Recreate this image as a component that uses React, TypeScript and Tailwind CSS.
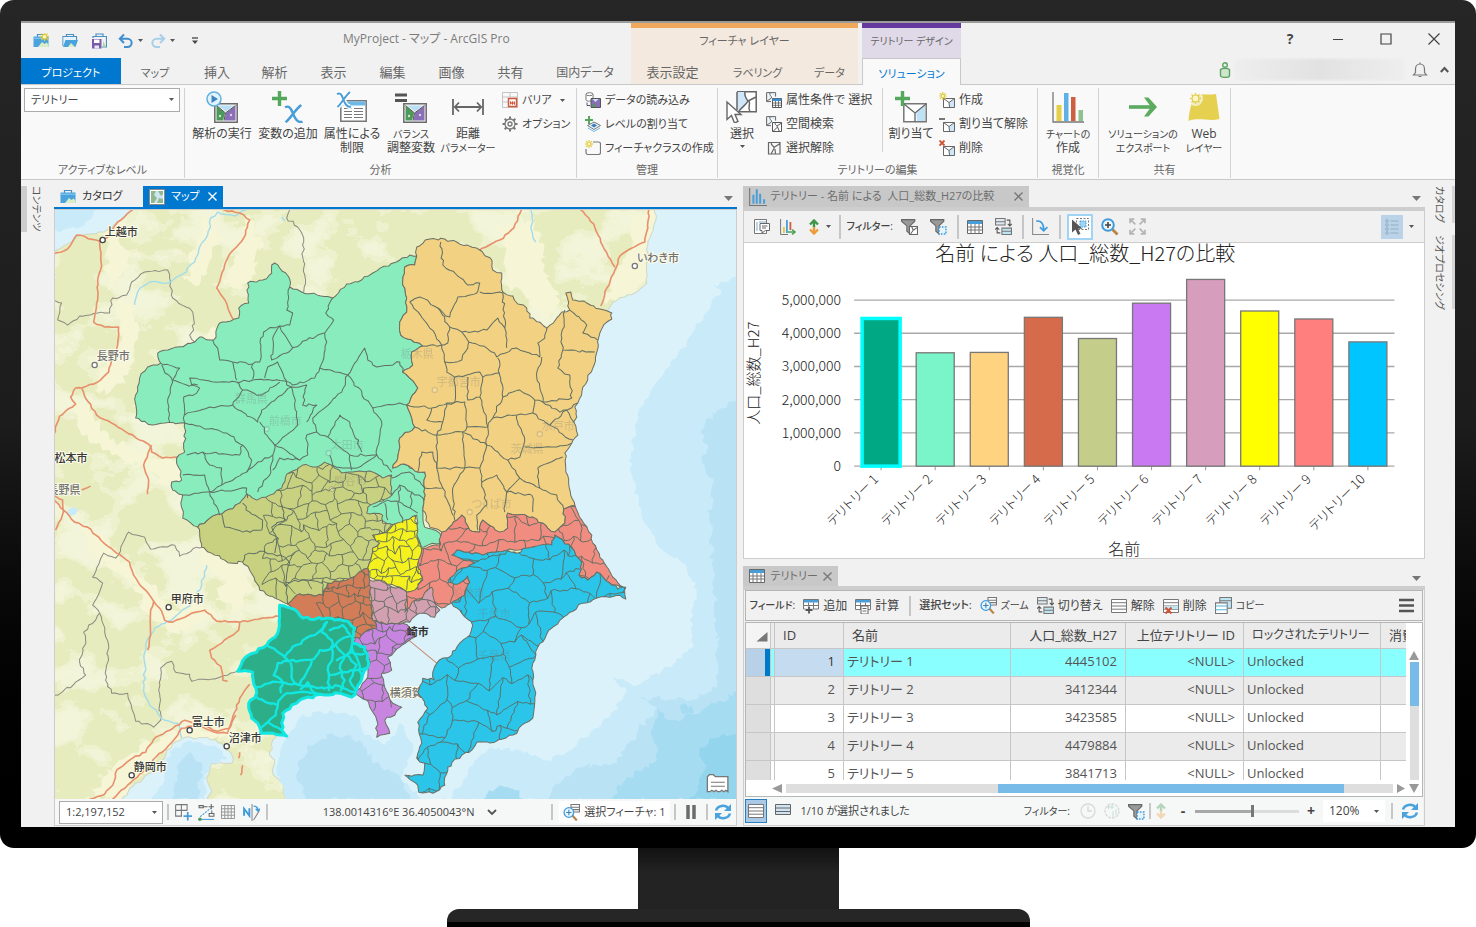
import type { ReactNode } from "react";

/* ---------- small building blocks ---------- */

type IconProps = { children: ReactNode; size?: number; box?: number; className?: string };

const Icon = ({ children, size = 16, box = size, className = "" }: IconProps) => (
	<svg
		width={size}
		height={size}
		viewBox={`0 0 ${box} ${box}`}
		fill="none"
		className={`shrink-0 ${className}`}
		aria-hidden="true"
	>
		{children}
	</svg>
);

const Caret = ({ className = "" }: { className?: string }) => (
	<svg width="5" height="3" viewBox="0 0 5 3" className={`shrink-0 ${className}`} aria-hidden="true">
		<path d="M0 0h5L2.500 3z" fill="#555" />
	</svg>
);

const PaneCaret = () => (
	<svg width="9" height="5" viewBox="0 0 9 5" className="mt-1 shrink-0" aria-hidden="true">
		<path d="M0 0h9L4.500 5z" fill="#777" />
	</svg>
);

const Close = ({ color }: { color: string }) => (
	<Icon size={9}>
		<path d="M.5.5l8 8M8.500.5l-8 8" stroke={color} strokeWidth="1.400" />
	</Icon>
);

const Divider = ({ className = "" }: { className?: string }) => (
	<span className={`w-0.5 shrink-0 bg-[#c6c6c6] ${className}`} />
);

/* ---------- icons ---------- */

const Sun = ({ x, y, r = 2.4 }: { x: number; y: number; r?: number }) => (
	<g stroke="#e0c93c" strokeWidth="1.200">
		<circle cx={x} cy={y} r={r} fill="#fdf6c4" />
		{[0, 45, 90, 135, 180, 225, 270, 315].map((a) => (
			<path key={a} d={`M${x} ${y - r - 0.6}v-1.500`} transform={`rotate(${a} ${x} ${y})`} />
		))}
	</g>
);

const Briefcase = () => (
	<>
		<path d="M4.500 4V1.500h7V4" stroke="#4a90c4" strokeWidth="1.200" />
		<path d="M.5 3.500h15V14H.5z" fill="#4aa3dc" />
		<path d="M.5 5.200h15" stroke="#8fd0f2" />
		<path d="M5 14l4-5 2.500 2 2-1.500 2 2V14z" fill="#d9edc8" />
	</>
);

const IconNew = () => (
	<Icon>
		<Briefcase />
		<Sun x={11.5} y={3.8} />
	</Icon>
);
const IconCase = () => (
	<Icon>
		<Briefcase />
	</Icon>
);
const IconOpen = () => (
	<Icon>
		<path d="M4.500 4V1.500h7V4M1 13V3.500h13.500V7" stroke="#4a90c4" strokeWidth="1.200" />
		<path d="M1.500 4h12.500v9H1.500z" fill="#e4f2fa" />
		<path d="M3.500 7H16l-2.500 7H1z" fill="#4aa3dc" />
		<path d="M6 14l3-4 4 4z" fill="#d9edc8" />
	</Icon>
);
const IconSave = () => (
	<Icon>
		<path d="M5 4V1h7v3M2 5V3.500h13.500V14H11" stroke="#4a90c4" strokeWidth="1.200" />
		<path d="M12 8l3 6h-3z" fill="#a5d8a0" />
		<path d="M1 6h9.500v9.500H1z" fill="#7a5cab" />
		<path d="M3 6.500h5.500V10H3z" fill="#fff" />
		<path d="M3.500 12.500h4.500v3H3.500z" fill="#ece6f5" />
	</Icon>
);
const IconUndo = ({ color = "#3f8fd0", flip = false }) => (
	<Icon className={flip ? "-scale-x-100" : ""}>
		<path d="M6 1.500L1.800 5.700 6 10M2 5.700h7.500a4 4 0 010 8.300H6" stroke={color} strokeWidth="2" />
	</Icon>
);
const IconCustomize = () => (
	<Icon size={8}>
		<path d="M1 1h6" stroke="#444" strokeWidth="1.300" />
		<path d="M1 3.500h6L4 7z" fill="#444" />
	</Icon>
);

const TerritoryTile = ({ x, y }: { x: number; y: number }) => (
	<g transform={`translate(${x} ${y})`}>
		<path d="M.8.8h22.400v18.400H.8z" fill="#f7f7f7" stroke="#6b6b6b" strokeWidth="1.500" />
		<path d="M2.500 2.500L11 10 9 17.500H2.500z" fill="#4c9a5a" />
		<path d="M12 10l9.500-7.500v15H10.500z" fill="#8a6fb8" />
		<path d="M4 2.500h16L12 8.500z" fill="#b8dff5" />
		<path d="M2.500 2.500l9 7.500 10-7.500M11.500 10L10 17.500" stroke="#555" />
		<circle cx="6" cy="13" r="1.200" fill="#c9e8c9" />
		<circle cx="17" cy="12" r="1.200" fill="#ddd0ee" />
	</g>
);
const IconRun = () => (
	<Icon size={32}>
		<TerritoryTile x={8} y={12} />
		<circle cx="8" cy="8" r="7" fill="#e2f3fc" stroke="#5fb0e0" strokeWidth="1.500" />
		<path d="M5.500 4l6.500 4-6.500 4z" fill="#3d86c0" />
	</Icon>
);
const curveX = "M0 2c3-1.500 4.500 0 6 4.500s4 9.500 8 8M13 0C8 4 5 11 .5 15";
const IconAddVar = () => (
	<Icon size={32}>
		<path d="M7.500 0v15M0 7.500h15" stroke="#54a85c" strokeWidth="3.400" />
		<path d={curveX} transform="translate(13 14) scale(1.250 1.150)" stroke="#4a9ed8" strokeWidth="2" />
	</Icon>
);
const IconConstraint = () => (
	<Icon size={32}>
		<path d="M4.800 9.800h25.400v20.400H4.800z" fill="#fff" stroke="#777" strokeWidth="1.500" />
		<path d="M5.500 10.500h24v4h-24z" fill="#6cb8e8" />
		<path d="M8 17.500h8M8 20.500h8M8 23.500h8M8 26.500h8M18 17.500h9M18 20.500h9M18 23.500h9M18 26.500h9" stroke="#777" />
		<path d={curveX} transform="translate(1 1)" stroke="#fff" strokeWidth="5" />
		<path d={curveX} transform="translate(1 1)" stroke="#4a9ed8" strokeWidth="2" />
	</Icon>
);
const IconBalance = () => (
	<Icon size={32}>
		<path d="M0 4h12M0 9.500h12" stroke="#555" strokeWidth="3" />
		<TerritoryTile x={8} y={12} />
	</Icon>
);
const IconDistance = () => (
	<Icon size={32}>
		<path d="M1 8v16M31 8v16M3 16h26M7 11.500L2.800 16 7 20.500M25 11.500l4.200 4.500-4.200 4.500" stroke="#666" strokeWidth="1.800" />
	</Icon>
);
const IconBarrier = () => (
	<Icon>
		<path d="M.5.5h15v15H.5zM.5 5h15M.5 10h6M8 .5V5" stroke="#c4c4c4" />
		<path d="M6.500 6.500h8v8h-8z" fill="#fff" stroke="#d0573a" strokeWidth="1.500" />
		<path d="M8.500 12.500v-3l2 3v-3l2 3v-3" stroke="#d0573a" />
	</Icon>
);
const IconGear = () => (
	<Icon>
		<circle cx="8" cy="8" r="5" stroke="#777" strokeWidth="1.300" />
		<circle cx="8" cy="8" r="2" stroke="#777" strokeWidth="1.300" />
		{[0, 45, 90, 135, 180, 225, 270, 315].map((a) => (
			<path key={a} d="M8 3V.5" stroke="#777" strokeWidth="2" transform={`rotate(${a} 8 8)`} />
		))}
	</Icon>
);
const IconLoad = () => (
	<Icon>
		<path d="M1 2.200v5.500c0 2 7 2 7 0V2.200" fill="#fff" stroke="#777" />
		<ellipse cx="4.500" cy="2.200" rx="3.500" ry="1.500" fill="#fff" stroke="#777" />
		<path d="M6 6.500h9.500v9H6z" fill="#8a6fb8" stroke="#555" />
		<path d="M6.500 15l4-4.500V15z" fill="#4c9a5a" />
		<path d="M7.500 7h6l-3 3z" fill="#cfe8f7" />
		<path d="M2 10.500v3h3" stroke="#555" />
	</Icon>
);
const IconLevel = () => (
	<Icon>
		<path d="M9 6l6.500 3.500L9 13.500 2.500 9.500z" fill="#e4f3fb" stroke="#777" />
		<path d="M3 12l6 3.500 6-3.500" stroke="#6cb8e8" />
		<path d="M9 7.500l3 2-3 2-3-2z" fill="#3d7fb5" />
		<path d="M4 0v8M0 4h8" stroke="#54a85c" strokeWidth="2" />
	</Icon>
);
const IconNewClass = () => (
	<Icon>
		<path d="M8 2h5.500a2 2 0 012 2v8.500a2 2 0 01-2 2H3a2 2 0 01-2-2V9" stroke="#777" strokeWidth="1.200" />
		<Sun x={4} y={4} r={2} />
	</Icon>
);
const IconSelect = () => (
	<Icon size={32}>
		<path d="M11 .8h19.200v20H12" fill="#fff" stroke="#666" strokeWidth="1.500" />
		<path d="M11 1h8c-1 4 1 6 3 9-2 4-6 6-9 10l-2-1z" fill="#cfe7f8" />
		<path d="M19 1c-1 4 1 6 3 9-2 4-6 6-9 10M22 10l8-4M23 10c2 4-2 7 1 10M11 1v18" stroke="#666" strokeWidth="1.500" />
		<path d="M1 11v17.500l4.500-4 3 7.500 3.500-1.500L9 23.500h6z" fill="#fff" stroke="#666" strokeWidth="1.400" />
	</Icon>
);
const IconByAttr = () => (
	<Icon>
		<path d="M.6.600h9v4M.6.600v9H5M4 .6C3 4 6 3.500 5.500 6L1 9" fill="#e4f1fa" stroke="#666" />
		<path d="M6.500 6.500h9v9h-9z" fill="#fff" stroke="#555" />
		<path d="M6.500 6.500h9v2.500h-9z" fill="#3f8fd0" />
		<path d="M6.500 11h9M6.500 13.300h9M9.500 9v6.500M12.500 9v6.500" stroke="#555" strokeWidth=".8" />
	</Icon>
);
const IconSpatial = () => (
	<Icon>
		<path d="M.6.600h9v4M.6.600v9H5M4 .6C3 4 6 3.500 5.500 6L1 9" fill="#e4f1fa" stroke="#666" />
		<path d="M6.500 6.500h9v9h-9z" fill="#fff" stroke="#555" />
		<path d="M9 6.500c0 4 3 2 2 5l-4 4M11 10l4.500-3M11.500 11l2 4.500" stroke="#555" />
	</Icon>
);
const IconClear = () => (
	<Icon>
		<path d="M2.500 2.500h11.500v11.500H2.500zM5 2.500c0 4 4 3 3 6l-3 5.500M8 7.500l6-4M9 9l.5 5" stroke="#666" strokeWidth="1.200" />
	</Icon>
);
const AreaTile = () => (
	<>
		<path d="M4.500 6.500h11v9h-11z" fill="#fff" stroke="#666" />
		<path d="M10 10.500l5-3.500v8h-4.500z" fill="#cfe7f8" />
		<path d="M4.500 6.500l5.500 4 5.500-4M10 10.500l.5 5" stroke="#666" />
	</>
);
const IconAssign = () => (
	<Icon size={32}>
		<path d="M8.800 12.800h22.400v18H8.800z" fill="#fff" stroke="#777" strokeWidth="1.500" />
		<path d="M21 21l9-7v16h-8z" fill="#bfe2f6" />
		<path d="M9 13l11 9 11-9M20 22v9" stroke="#666" strokeWidth="1.300" />
		<path d="M7.500 0v15M0 7.500h15" stroke="#54a85c" strokeWidth="3.400" />
	</Icon>
);
const IconCreate = () => (
	<Icon>
		<AreaTile />
		<Sun x={3.800} y={4} r={1.800} />
	</Icon>
);
const IconUnassign = () => (
	<Icon>
		<AreaTile />
		<path d="M0 3h6" stroke="#555" strokeWidth="1.600" />
	</Icon>
);
const IconRemove = () => (
	<Icon>
		<AreaTile />
		<path d="M.5.5l5 5M5.500.5l-5 5" stroke="#cf5234" strokeWidth="1.800" />
	</Icon>
);
const IconChart = () => (
	<Icon size={32}>
		<path d="M1 1v30h31" stroke="#777" strokeWidth="1.300" />
		<path d="M4.500 14h5v16h-5z" fill="#e5cf45" />
		<path d="M12 2h4.500v28H12z" fill="#5fb0e4" />
		<path d="M19 6h4.500v24H19z" fill="#cb5f40" />
		<path d="M26.500 19H31v11h-4.500z" fill="#8fc28f" />
	</Icon>
);
const IconExport = () => (
	<Icon size={32}>
		<path d="M2 16h24" stroke="#5cab5f" strokeWidth="3.600" />
		<path d="M17 6.500h4.500L30 16l-8.500 9.500H17l7-9.500z" fill="#5cab5f" />
	</Icon>
);
const IconWebLayer = () => (
	<Icon size={32}>
		<path d="M5 5c8-4 14 0 23-2l3.500 25c-10 3-20-2-31 2C1 20 4 13 5 5z" fill="#e5d14f" />
		<circle cx="7.500" cy="7.500" r="7.500" fill="#f9f9f9" opacity=".7" />
		<Sun x={7.500} y={7.500} r={3.500} />
	</Icon>
);

const IconBars = () => (
	<Icon size={18} box={16}>
		<path d="M.6 0v15.500H16" stroke="#777" />
		<path d="M3 6h1.800v8H3zM6 1h1.800v13H6zM9 5h1.800v9H9zM12.500 10h1.800v4h-1.800z" fill="#4a9ed8" />
	</Icon>
);
const IconMapTab = () => (
	<Icon>
		<path d="M.5.5h15v15H.5z" fill="#fff" stroke="#888" />
		<path d="M2 2h12v12H2z" fill="#cfe6f2" />
		<path d="M2 2h5l-2 4 3 3-3 5H2zM9 2h5v3l-2 2zM10 9l4 1v4H8z" fill="#8fb98c" />
	</Icon>
);
const IconTable = () => (
	<Icon>
		<path d="M.5 1.500h15v13H.5z" fill="#fff" stroke="#666" />
		<path d="M1 2h14v3H1z" fill="#4a9ed8" />
		<path d="M.5 8h15M.5 11h15M4 5v9.500M8 5v9.500M12 5v9.500" stroke="#777" />
	</Icon>
);
const IconProps16 = () => (
	<Icon>
		<path d="M.5.5h12v14H.5z" fill="#fff" stroke="#777" />
		<path d="M3 3v9M5 3h7" stroke="#7aa9c9" />
		<path d="M6 4.500h9.500v7h-4L8 14v-2.500H6z" fill="#fff" stroke="#666" />
		<path d="M8 7h5.500M8 9h4" stroke="#666" />
	</Icon>
);
const IconSortChart = () => (
	<Icon>
		<path d="M.6 0v15.500H8" stroke="#777" />
		<path d="M3 8h1.800v6H3z" fill="#e0c93c" />
		<path d="M6 1h1.800v13H6z" fill="#4a9ed8" />
		<path d="M9.500 3h1.800v8H9.500z" fill="#cb5f40" />
		<path d="M8 13h6M12 10.500l3 2.500-3 2.500" stroke="#4ca354" strokeWidth="1.500" />
	</Icon>
);
const IconUpDown = ({ faint = false }) => (
	<Icon size={16} className={faint ? "opacity-35" : ""}>
		<path d="M8 8V2M4 5.500L8 1.500l4 4" stroke="#3f9648" strokeWidth="2.400" />
		<path d="M8 8v6M4 10.500l4 4 4-4" stroke="#ee9a3a" strokeWidth="2.400" />
	</Icon>
);
const Funnel = () => <path d="M.5 1.500h12.500v1.500L8.500 7.500V15l-3-2.500v-5L.5 3z" fill="#999" stroke="#666" />;
const IconFunnelMap = () => (
	<Icon size={17} box={16}>
		<Funnel />
		<path d="M8 8h7.500v7.500H8z" fill="#fff" stroke="#666" />
		<path d="M10 8l1.500 3.500L9 15M11.500 11.500L15 9" stroke="#666" />
	</Icon>
);
const IconFunnelSel = () => (
	<Icon size={17} box={16}>
		<Funnel />
		<path d="M8.500 8.500h6.500V15H8.500z" fill="#e6f3fb" stroke="#3f9bdc" strokeWidth="1.400" strokeDasharray="1.500 1.200" />
	</Icon>
);
const IconSwitch = () => (
	<Icon size={17} box={16}>
		<path d="M.5.5h9v6h-9zM.5 3.500h9" fill="#dde9ee" stroke="#777" />
		<path d="M6.500 9.500h9v6h-9zM6.500 12.500h9" fill="#bfe6f0" stroke="#777" />
		<path d="M11 2h3v5M12 5.500l2 2 2-2M5 14H2V9.500M0 11l2-2 2 2" stroke="#555" />
	</Icon>
);
const IconRotateAxis = () => (
	<Icon size={17} box={16}>
		<path d="M.6 0v15.500H16" stroke="#888" />
		<path d="M4 3c5-1 7 3 7 8M7.500 8.500L11 12l3.500-3.500" stroke="#3f9bdc" strokeWidth="1.600" />
	</Icon>
);
const IconCursorSel = () => (
	<Icon size={18} box={18}>
		<path d="M5.500.5h12v11h-12z" fill="#fff" stroke="#777" strokeDasharray="2 1.500" />
		<path d="M9 3h6v6H9z" fill="#9ed6f5" stroke="#3f9bdc" strokeDasharray="1.500 1" />
		<path d="M1 1.500v13l3.500-3 2.500 5.500 2.500-1.200-2.500-5h4.500z" fill="#555" />
	</Icon>
);
const IconZoomIn = () => (
	<Icon size={18} box={18}>
		<path d="M11.500 11.500l5 5" stroke="#b98346" strokeWidth="2.800" />
		<circle cx="7" cy="7" r="5.800" fill="#eaf6fd" stroke="#3f9bdc" strokeWidth="2" />
		<path d="M7 4v6M4 7h6" stroke="#444" strokeWidth="1.600" />
	</Icon>
);
const IconExpand = () => (
	<Icon size={17} box={16}>
		<path
			d="M1 5V1h4M1 1l5 5M11 1h4v4M15 1l-5 5M1 11v4h4M1 15l5-5M15 11v4h-4M15 15l-5-5"
			stroke="#b5b5b5"
			strokeWidth="1.600"
		/>
	</Icon>
);
const IconLegend = () => (
	<Icon>
		<g stroke="#93aec4">
			<circle cx="3" cy="2" r="1.300" />
			<circle cx="3" cy="6" r="1.300" />
			<circle cx="3" cy="10" r="1.300" />
			<circle cx="3" cy="14" r="1.300" />
			<path d="M6.500 2h8M6.500 6h8M6.500 10h8M6.500 14h8" />
		</g>
	</Icon>
);
const Rows = () => (
	<>
		<path d="M.5 1.500h15v13H.5z" fill="#fff" stroke="#777" />
		<path d="M.5 4.700h15M.5 8h15M.5 11.200h15" stroke="#777" />
	</>
);
const IconFieldAdd = () => (
	<Icon>
		<path d="M.5 1.500h15V11H.5z" fill="#fff" stroke="#777" />
		<path d="M1 2h14v2.500H1z" fill="#4a9ed8" />
		<path d="M.5 7.500h15M5.500 4.500V11M10.500 4.500V11" stroke="#777" />
		<path d="M6 8v8M2 12h8" stroke="#f1f1f1" strokeWidth="3.500" />
		<path d="M6 8.500v7M2.500 12h7" stroke="#555" strokeWidth="1.800" />
	</Icon>
);
const IconFieldCalc = () => (
	<Icon>
		<path d="M.5 1.500h15v10H.5z" fill="#fff" stroke="#777" />
		<path d="M1 2h14v2.500H1z" fill="#4a9ed8" />
		<path d="M.5 7.500h15M5.500 4.500v7M10.500 4.500v7" stroke="#777" />
		<path d="M6 8h7v8H6z" fill="#fff" stroke="#666" />
		<path d="M7.500 10.500h4M7.500 13h4" stroke="#666" />
	</Icon>
);
const IconZoomSel = () => (
	<Icon size={17} box={16}>
		<path d="M7.500.5h8v7h-8zM7.500 3h8M7.500 5.300h8" fill="#fff" stroke="#777" />
		<path d="M9 11l4 4.500" stroke="#b98346" strokeWidth="2" />
		<circle cx="5.500" cy="8" r="4.500" fill="#eaf6fd" stroke="#3f9bdc" strokeWidth="1.200" />
		<path d="M5.500 5.500v5M3 8h5" stroke="#3d7fb5" />
	</Icon>
);
const IconRows = () => (
	<Icon>
		<Rows />
	</Icon>
);
const IconRowsDelete = () => (
	<Icon>
		<Rows />
		<path d="M1 8h14v3H1z" fill="#bfe6f5" />
		<path d="M2.500 9.500l6 6M8.500 9.500l-6 6" stroke="#cf5234" strokeWidth="2" />
	</Icon>
);
const IconCopy = () => (
	<Icon size={17} box={16}>
		<path d="M4.500.5h11v10h-11zM4.500 3.500h11" fill="#bfe6f5" stroke="#777" />
		<path d="M.5 5.500h11v10H.5z" fill="#fff" stroke="#777" />
		<path d="M.5 8.500h11M.5 12h11" stroke="#4fb6d8" />
	</Icon>
);
const IconRefresh = () => (
	<Icon size={18} box={18}>
		<path d="M2 7.500C3.500 2.500 11 1 14.500 5.500M16 10.500c-1.500 5-9 6.500-12.500 2" stroke="#4aa3dc" strokeWidth="2.600" />
		<path d="M17 1v7h-7zM1 17v-7h7z" fill="#4aa3dc" />
	</Icon>
);
const IconGridPlus = () => (
	<Icon size={17} box={16}>
		<path d="M.6.600h10.800v5.800M.6.600v10.800h6M6 .6v10.800M.6 6h10.800" stroke="#777" />
		<path d="M12 7.500v8M8 11.500h8" stroke="#4a9ed8" strokeWidth="1.700" />
	</Icon>
);
const IconEditNodes = () => (
	<Icon size={17} box={16}>
		<path d="M2 12L12 4" stroke="#4a9ed8" strokeDasharray="2 1" />
		<path d="M1 1.500h4v2H1zM10.500 9h4.500v2.500h-4.500zM5 2.500h4M13 6v3" stroke="#666" />
		<path d="M12.500 0v5M10 2.500h5" stroke="#666" />
		<path d="M2 14.500h13" stroke="#4a9ed8" />
		<circle cx="1.800" cy="14.300" r="1.700" fill="#4c9a5a" />
	</Icon>
);
const IconMesh = () => (
	<Icon size={14} box={14}>
		<path
			d="M.5.5h13v13H.5zM.5 3.750h13M.5 7h13M.5 10.250h13M3.750.5v13M7 .5v13M10.250.5v13"
			stroke="#999"
		/>
	</Icon>
);
const IconNorth = () => (
	<Icon size={17} box={16}>
		<path d="M1 11V4.500l5 6.500V4" stroke="#3f9bdc" strokeWidth="1.800" />
		<path d="M8.500 0v16M10 15l5.500-9" stroke="#888" />
		<path d="M10 2c3 0 4 1.500 4 4M12 4.500l2 2 2-2" stroke="#3f9bdc" strokeWidth="1.300" />
	</Icon>
);
const IconClock = () => (
	<Icon className="opacity-40">
		<circle cx="8" cy="8" r="7" stroke="#aaa" strokeWidth="1.300" />
		<path d="M8 3v5h4" stroke="#aaa" strokeWidth="1.300" />
	</Icon>
);
const IconRange = () => (
	<Icon className="opacity-40">
		<circle cx="8" cy="8" r="7" stroke="#aaa" strokeWidth="1.300" strokeDasharray="3 1" />
		<path d="M3 4h7M4.500 2v4M8 2v4M9 8v6M12 6v6" stroke="#7fb7a0" />
	</Icon>
);

/* ---------- title bar and tabs ---------- */

const tabs = [
	{ label: "マップ", className: "w-[68px] text-[11px]" },
	{ label: "挿入", className: "w-14" },
	{ label: "解析", className: "w-[59px]" },
	{ label: "表示", className: "w-[59px]" },
	{ label: "編集", className: "w-[59px]" },
	{ label: "画像", className: "w-[59px]" },
	{ label: "共有", className: "w-[59px]" },
	{ label: "国内データ", className: "w-[90px] text-xs" },
];

const contextTabs = [
	{ label: "表示設定", className: "w-[83px]" },
	{ label: "ラベリング", className: "w-[87px] text-[11px]" },
	{ label: "データ", className: "w-[57px] text-[11px]" },
];

const Header = () => (
	<header className="flex h-16 shrink-0 border-t-2 border-b border-t-[#9b9b9b] border-b-[#c8c8c8] text-[13px] text-[#666]">
		<div className="flex w-[610px] shrink-0 flex-col">
			<div className="flex h-[35px] items-center pl-3">
				<button aria-label="新規" className="w-[29px]"><IconNew /></button>
				<button aria-label="開く" className="w-[29px]"><IconOpen /></button>
				<button aria-label="保存" className="w-[27px]"><IconSave /></button>
				<button aria-label="元に戻す" className="flex w-8 items-center gap-1"><IconUndo /><Caret /></button>
				<button aria-label="やり直し" className="flex w-[41px] items-center gap-1"><IconUndo color="#a9cfe8" flip /><Caret /></button>
				<button aria-label="カスタマイズ"><IconCustomize /></button>
				<h1 className="ml-36 pb-1 text-xs text-[#7c7c7c]">MyProject - マップ - ArcGIS Pro</h1>
			</div>
			<nav className="flex flex-1 items-stretch">
				<button className="w-[100px] bg-[#0078d0] pt-1 text-[11px] text-white">プロジェクト</button>
				{tabs.map((tab) => (
					<button key={tab.label} className={`pt-1 ${tab.className}`}>{tab.label}</button>
				))}
			</nav>
		</div>
		<div className="flex shrink-0 flex-col border-t-[5px] border-[#f0a95c] bg-[#f3e9de]">
			<span className="flex h-[30px] items-center justify-center pb-1 text-[11px]">フィーチャ レイヤー</span>
			<nav className="flex flex-1">
				{contextTabs.map((tab) => (
					<button key={tab.label} className={`pt-1 ${tab.className}`}>{tab.label}</button>
				))}
			</nav>
		</div>
		<div className="ml-1 flex w-[99px] shrink-0 flex-col border-t-[5px] border-[#643a9e] bg-[#e0d9e8]">
			<span className="flex h-[30px] items-center justify-center pb-1 text-[10px] whitespace-nowrap">テリトリー デザイン</span>
			<button className="-mb-px flex-1 border border-b-0 border-[#c8c8c8] bg-[#f9f9f9] pt-1 text-[11px] text-[#0078d0]">
				ソリューション
			</button>
		</div>
		<div className="flex min-w-0 flex-1 flex-col text-[#444]">
			<div className="flex h-8 items-center justify-end gap-2 pr-px">
				<button className="w-10 text-sm font-bold">?</button>
				<button aria-label="最小化" className="flex w-10 justify-center">
					<Icon size={12}><path d="M1 6.500h10" stroke="#444" /></Icon>
				</button>
				<button aria-label="最大化" className="flex w-10 justify-center">
					<Icon size={12}><path d="M1 1h10v10H1z" stroke="#444" strokeWidth="1.200" /></Icon>
				</button>
				<button aria-label="閉じる" className="flex w-10 justify-center">
					<Icon size={12}><path d="M.5.5l11 11M11.500.5l-11 11" stroke="#444" strokeWidth="1.200" /></Icon>
				</button>
			</div>
			<div className="flex flex-1 items-center justify-end pr-1.5">
				<Icon size={16}>
					<circle cx="8" cy="3" r="2.300" fill="#e5f3e3" stroke="#5ea364" strokeWidth="1.400" />
					<path d="M3.500 7.500c1.500-1.500 7.500-1.500 9 0v6c0 2.500-9 2.500-9 0z" fill="#cfe6cd" stroke="#5ea364" strokeWidth="1.400" />
				</Icon>
				<span className="mr-2 ml-0.5 h-[21px] w-[169px] bg-linear-to-r from-[#eeeeee] via-[#e2e2e2] to-[#eeeeee] blur-[1px]" />
				<button aria-label="通知" className="mr-3">
					<Icon size={16}>
						<path d="M1.500 13h13l-2-2.500V7c0-3-2-5-4.500-5S3.500 4 3.500 7v3.500zM8 2V.5M6.500 14.500h3" stroke="#777" strokeWidth="1.200" />
					</Icon>
				</button>
				<button aria-label="リボンを閉じる">
					<Icon size={9}><path d="M.8 7l3.700-4 3.700 4" stroke="#555" strokeWidth="2" /></Icon>
				</button>
			</div>
		</div>
	</header>
);

/* ---------- ribbon ---------- */

const RibbonGroup = ({ label, className, children }: { label: string; className: string; children: ReactNode }) => (
	<section className={`flex shrink-0 flex-col ${className}`}>
		<div className="flex min-h-0 flex-1 border-r border-[#d2d2d2]">{children}</div>
		<h2 className="flex h-4 items-center justify-center border-r border-[#d2d2d2] text-[11px] text-[#666]">{label}</h2>
	</section>
);

const isKatakana = (text: string) => /^[ァ-ー]+の?$/.test(text);

const BigButton = ({ icon, lines, className, caret = false }: { icon: ReactNode; lines: string[]; className: string; caret?: boolean }) => (
	<button className={`flex shrink-0 flex-col items-center pt-[3px] text-xs leading-[14px] whitespace-nowrap ${className}`}>
		<span className="mb-1">{icon}</span>
		{lines.map((line) => (
			<span key={line} className={isKatakana(line) ? "text-[10px] leading-[14px]" : ""}>{line}</span>
		))}
		{caret && <Caret className="mt-1" />}
	</button>
);

const SmallButton = ({ icon, label, dense = false, caret = false }: { icon: ReactNode; label: string; dense?: boolean; caret?: boolean }) => (
	<button className={`flex h-6 items-center gap-1 whitespace-nowrap ${dense ? "text-[11px]" : "text-xs"}`}>
		{icon}
		{label}
		{caret && <Caret className="ml-1" />}
	</button>
);

const Ribbon = () => (
	<div className="flex h-[95px] shrink-0 border-b border-[#c8c8c8] bg-[#f9f9f9] pt-[3px] pb-px text-[#444]">
		<RibbonGroup label="アクティブなレベル" className="w-[164px]">
			<div className="relative ml-[3px] h-6 w-[156px] self-start">
				<select
					aria-label="アクティブなレベル"
					className="block h-6 w-full appearance-none border border-[#ababab] bg-white pl-1.5 text-[11px]"
				>
					<option>テリトリー</option>
				</select>
				<Caret className="pointer-events-none absolute top-2.5 right-1.5" />
			</div>
		</RibbonGroup>
		<RibbonGroup label="分析" className="w-[392px]">
			<div className="flex pl-[3px]">
				<BigButton icon={<IconRun />} lines={["解析の実行"]} className="w-[68px]" />
				<BigButton icon={<IconAddVar />} lines={["変数の追加"]} className="w-16" />
				<BigButton icon={<IconConstraint />} lines={["属性による", "制限"]} className="w-16" />
				<BigButton icon={<IconBalance />} lines={["バランス", "調整変数"]} className="w-[54px]" />
				<BigButton icon={<IconDistance />} lines={["距離", "パラメーター"]} className="w-[60px]" />
				<div className="pl-1">
					<SmallButton icon={<IconBarrier />} label="バリア" dense caret />
					<SmallButton icon={<IconGear />} label="オプション" dense />
				</div>
			</div>
		</RibbonGroup>
		<RibbonGroup label="管理" className="w-[141px]">
			<div className="pl-2">
				<SmallButton icon={<IconLoad />} label="データの読み込み" dense />
				<SmallButton icon={<IconLevel />} label="レベルの割り当て" dense />
				<SmallButton icon={<IconNewClass />} label="フィーチャクラスの作成" dense />
			</div>
		</RibbonGroup>
		<RibbonGroup label="テリトリーの編集" className="w-80">
			<BigButton icon={<IconSelect />} lines={["選択"]} className="ml-1 w-10" caret />
			<div className="w-[120px] pl-1">
				<SmallButton icon={<IconByAttr />} label="属性条件で 選択" />
				<SmallButton icon={<IconSpatial />} label="空間検索" />
				<SmallButton icon={<IconClear />} label="選択解除" />
			</div>
			<span className="mr-1 h-16 w-px bg-[#d2d2d2]" />
			<BigButton icon={<IconAssign />} lines={["割り当て"]} className="w-12" />
			<div className="pl-1">
				<SmallButton icon={<IconCreate />} label="作成" />
				<SmallButton icon={<IconUnassign />} label="割り当て解除" />
				<SmallButton icon={<IconRemove />} label="削除" />
			</div>
		</RibbonGroup>
		<RibbonGroup label="視覚化" className="w-[61px]">
			<BigButton icon={<IconChart />} lines={["チャートの", "作成"]} className="w-full" />
		</RibbonGroup>
		<RibbonGroup label="共有" className="w-[132px]">
			<BigButton icon={<IconExport />} lines={["ソリューションの", "エクスポート"]} className="ml-2 w-[72px]" />
			<BigButton icon={<IconWebLayer />} lines={["Web", "レイヤー"]} className="w-[50px]" />
		</RibbonGroup>
	</div>
);

/* ---------- map ---------- */

const noise = (x: number, y: number) => {
	const s = Math.sin(x * 12.9898 + y * 78.233) * 43758.5453;
	return s - Math.floor(s) - 0.5;
};

// Turns a coarse "x,y x,y" list into a path with a ragged, surveyed look.
const rough = (points: string, closed = false, amount = 2.6) => {
	const pts = points.trim().split(/\s+/).map((p) => p.split(",").map(Number));
	if (closed) pts.push(pts[0]);
	let d = `M${pts[0][0]} ${pts[0][1]}`;
	for (let i = 1; i < pts.length; i++) {
		const [x0, y0] = pts[i - 1];
		const [x1, y1] = pts[i];
		const steps = Math.max(1, Math.round(Math.hypot(x1 - x0, y1 - y0) / 4));
		for (let s = 1; s <= steps; s++) {
			const x = x0 + ((x1 - x0) * s) / steps;
			const y = y0 + ((y1 - y0) * s) / steps;
			const k = s === steps ? 0 : amount;
			d += `L${(x + noise(Math.round(x), y) * k).toFixed(1)} ${(y + noise(y, Math.round(x)) * k).toFixed(1)}`;
		}
	}
	return closed ? `${d}Z` : d;
};

// Irregular honeycomb of district borders covering a box.
const districts = (x: number, y: number, w: number, h: number, size: number) => {
	const step = size * 0.65;
	const at = (i: number, j: number) => {
		const px = x + i * step + noise(i + x, j * 3.1) * size * 0.7;
		const py = y + j * size + noise(j + y, i * 5.3) * size * 0.9;
		return `${px.toFixed(1)},${py.toFixed(1)}`;
	};
	let d = "";
	for (let i = 0; i * step < w; i++) {
		for (let j = 0; j * size < h; j++) {
			d += rough(`${at(i, j)} ${at(i + 1, j)}`);
			if ((i + j) % 2 === 0) d += rough(`${at(i, j)} ${at(i, j + 1)}`);
		}
	}
	return d;
};

type Territory = { id: number; fill: string; outline: string; mesh?: [number, number, number, number, number] };

const territories: Territory[] = [
	{
		id: 2,
		fill: "#88ecbd",
		outline:
			"275,263 280,268 290,279 290,287 302,292 333,298 347,284 358,282 373,273 400,260 410,255 417,256 415,265 405,267 403,285 407,298 407,312 400,322 401,335 423,346 412,352 413,365 403,372 418,388 407,405 415,427 400,438 398,458 393,468 400,462 418,472 425,472 425,488 423,510 425,527 440,533 440,543 428,545 422,547 418,537 417,515 400,525 387,523 367,513 330,500 240,503 222,514 213,516 198,527 183,518 182,500 183,495 173,490 172,482 182,480 177,458 185,452 185,423 165,423 153,425 136,418 136,395 140,378 148,367 161,363 158,353 168,350 195,342 200,337 214,340 220,323 239,318 239,308 249,303 248,283 263,280 272,273 272,265",
	},
	{
		id: 5,
		fill: "#c8d180",
		outline:
			"198,527 213,516 222,514 240,503 247,494 257,500 270,495 282,488 287,474 303,465 317,467 325,462 335,468 342,473 350,472 373,472 383,478 392,475 392,495 368,507 367,513 383,515 383,523 393,525 387,532 373,535 380,543 373,548 372,555 368,568 362,572 347,580 328,583 323,595 297,595 288,604 280,600 260,590 250,570 243,562 233,563 215,555 202,547 200,533",
		mesh: [266, 464, 130, 125, 13],
	},
	{
		id: 3,
		fill: "#f2d182",
		outline:
			"417,256 417,247 430,239 445,239 480,250 492,260 493,270 502,273 503,292 513,296 518,304 527,308 530,318 540,322 547,328 562,312 570,310 566,293 571,292 573,300 587,303 600,309 612,313 612,319 607,322 600,333 597,352 593,368 583,387 578,403 575,407 577,417 574,422 578,435 572,443 565,453 566,472 572,498 575,505 564,509 565,523 555,532 533,517 508,513 508,528 500,532 483,520 480,532 470,530 462,515 452,525 442,532 430,527 423,510 425,488 425,472 418,472 405,464 393,468 398,458 400,438 415,427 407,405 418,388 403,372 413,365 412,352 423,346 401,335 400,322 407,312 407,298 403,285 405,267 415,265",
	},
	{
		id: 9,
		fill: "#f08d80",
		outline:
			"442,532 452,525 462,515 470,530 480,532 483,520 500,532 508,528 508,513 533,517 555,532 565,523 564,509 575,505 582,520 592,535 593,543 603,560 620,585 625,588 610,583 597,572 588,580 579,575 582,562 572,548 555,535 552,545 527,548 507,550 483,555 457,550 475,563 462,568 448,580 458,583 468,576 470,582 465,595 452,603 442,608 435,603 420,598 407,610 400,593 412,590 423,580 417,563 422,548 440,545",
		mesh: [400, 505, 200, 110, 19],
	},
	{
		id: 10,
		fill: "#2bc5e9",
		outline:
			"555,535 552,545 540,545 527,548 517,553 507,550 483,555 457,550 452,555 475,563 462,568 450,578 448,583 458,584 468,576 470,582 465,595 452,603 460,610 473,625 470,635 460,643 452,655 437,663 433,672 435,680 423,678 418,692 428,708 418,722 422,743 417,758 425,763 423,775 405,775 418,785 419,792 433,793 445,785 448,767 462,755 472,750 477,742 495,742 517,733 522,725 533,718 536,693 533,680 533,663 538,647 552,628 567,615 583,603 597,598 620,595 626,599 626,587 618,589 610,583 597,572 588,580 579,575 582,562 572,548",
		mesh: [400, 530, 240, 270, 22],
	},
	{
		id: 8,
		fill: "#f4f11e",
		outline:
			"416,516 417,535 422,550 418,567 423,578 415,590 407,592 400,587 380,580 370,577 368,568 372,555 373,548 380,543 373,535 387,532 393,525 405,520",
		mesh: [362, 510, 65, 85, 10],
	},
	{
		id: 4,
		fill: "#d27c58",
		outline:
			"288,604 297,595 323,595 328,583 347,580 363,570 368,568 370,580 372,617 377,628 365,632 360,638 353,637 355,627 347,621 327,618 303,618 293,610",
		mesh: [320, 565, 60, 80, 10],
	},
	{
		id: 7,
		fill: "#d2a0b0",
		outline:
			"370,580 380,580 393,587 400,587 407,592 405,612 415,600 423,597 432,587 435,603 440,610 435,617 420,613 410,622 403,623 380,623 373,620",
		mesh: [368, 575, 75, 55, 12],
	},
	{
		id: 6,
		fill: "#c885e0",
		outline:
			"375,620 380,623 403,623 410,628 415,637 400,647 388,657 392,670 382,673 385,687 393,703 402,707 395,715 385,720 390,733 377,737 377,720 367,700 355,693 368,677 370,660 365,647 353,643 355,637 360,638 365,632 377,628",
		mesh: [350, 615, 70, 90, 12],
	},
];

const selectedOutline =
	"280,605 287,607 298,612 303,618 327,618 348,621 355,628 353,643 365,647 369,663 360,683 352,697 340,693 320,694 300,700 283,713 282,730 287,736 273,733 261,733 260,727 252,718 249,703 257,693 253,672 238,671 245,658 267,645 278,633";

const selectedBorders = [
	"267,645 277,651 285,657 291,650 303,640 315,635 327,622",
	"285,657 289,661 314,659 320,650 332,648 340,640 353,636",
	"289,661 278,663 274,675 283,682 281,692",
	"257,687 270,683 283,682 300,685 318,688 340,686 354,692",
	"291,663 293,680 300,685",
	"312,661 308,670 300,684",
	"257,697 266,702 278,705 284,695 300,692 320,694",
	"278,705 276,715 268,722 261,728",
	"268,722 282,730",
	"327,622 322,632 332,640 333,655 328,670 329,690",
	"336,645 345,655 340,668 345,680 341,690",
	"353,643 347,655 357,665 350,680 356,690",
	"330,630 343,625 350,634",
	"337,660 352,652 364,654",
	"330,675 348,672 366,668",
	"352,645 358,660 362,678",
	"301,689 308,682 314,692",
];

const borders = [
	// 群馬・栃木
	"290,287 287,310 293,313 290,325 280,326 267,330 261,338 260,362 253,364 233,362 220,360 218,348 213,340",
	"333,298 326,313 334,320 325,333 327,342 320,368 315,378 293,385 285,381 253,380 237,382 220,382 190,378 192,385 200,388 197,393 184,397 185,423",
	"325,333 307,340 287,353 272,360 273,338 280,326 287,338 293,348",
	"233,362 237,380",
	"253,364 253,379",
	"265,378 268,367 278,362 287,385 292,387",
	"161,363 180,368 173,380 187,385 198,385",
	"162,365 173,382 168,402 170,422",
	"237,382 243,390 233,405 210,407 185,415",
	"233,405 258,422 262,410 292,387 297,412 298,425 275,445 267,435 260,422",
	"185,423 227,433 243,445 240,455 203,452 187,455",
	"275,445 273,455 258,462 247,472 222,485 210,492 247,488 248,498",
	"203,452 210,465 222,468 222,485",
	"183,475 205,475 210,492 220,515",
	"183,495 210,492",
	"273,455 270,475 258,492",
	"300,460 280,458 273,470",
	"320,368 348,375 342,392 313,418 317,432 307,435 308,455 300,460 283,448 275,445",
	"348,375 373,408 382,422 377,455 350,455 328,437 317,432",
	"328,437 340,415 350,422 362,452",
	"292,387 307,385 303,405 317,405 307,422",
	"348,375 355,363 365,348 368,360 377,367 400,362 403,372",
	"373,408 400,403 407,405",
	"330,455 333,465 343,468 357,468 377,455 392,472",
	"350,455 352,470",
	"392,478 410,472 425,488",
	"392,495 400,485 412,492 425,500",
	"373,507 388,500 402,503 418,513",
	"400,485 398,503 403,523",
	"412,492 410,508",
	"385,503 388,520",
	"243,390 262,395 280,382",
	"247,472 252,460 243,445",
	// 茨城・栃木
	"441,242 443,265 457,275 468,285 480,283 477,293 458,297 450,317 438,308 420,297 410,302",
	"480,292 503,293 505,328 498,318 487,330 462,332 450,327 438,308",
	"410,302 430,328 442,345 448,343 450,327",
	"423,346 442,345",
	"462,332 469,342 487,348 497,357 517,348 540,357 538,343 545,338 547,328",
	"505,328 507,348",
	"565,310 562,338 563,350 595,352",
	"570,310 587,325 583,333 598,340",
	"563,350 558,368 570,375 572,398 543,402 537,372 542,357",
	"498,358 503,397 520,390 535,400 543,402",
	"469,342 468,348 462,360 445,362 447,372 455,377 467,375 480,372 483,377 500,373",
	"442,345 445,362",
	"455,377 455,402 432,408 407,405",
	"468,377 468,400 480,397 483,377",
	"503,397 493,418 488,427 467,427 465,402 447,403 443,422 437,435 415,427",
	"432,408 427,420 443,422",
	"493,418 517,415 533,413 535,400",
	"488,427 487,445 463,432 467,427",
	"463,432 437,435",
	"463,432 465,468 437,468 433,452 422,452 418,472",
	"437,435 437,468",
	"487,445 480,468 465,468",
	"487,445 508,460 520,457 525,440 518,422 517,415",
	"525,447 557,447 572,443",
	"533,413 550,425 567,410 574,422",
	"550,425 573,440",
	"543,402 560,412 578,403",
	"508,460 520,478 540,488 538,468 563,457",
	"540,488 557,495 564,509",
	"480,468 482,482 497,475 507,492 532,495 533,512",
	"482,482 487,505 477,515 478,530",
	"465,468 453,488 455,520",
	"437,468 443,488 425,488",
	"443,488 453,515",
	"480,397 484,412 488,427",
	"507,492 505,512",
	"520,478 507,492",
	// 秩父
	"222,514 225,527 243,532 262,530 263,520 250,512 243,503",
	"243,562 245,555 260,551 285,557 290,563 286,582 288,604",
	"275,553 277,540 272,527 285,520 282,505",
	"286,582 310,580 328,583",
];

const roads = [
	"134,209 118,222 107,238 100,241 77,235 68,249 54,254",
	"100,241 102,266 98,280 98,300 94,322 105,327 119,327 118,345 112,360 109,372 98,382 82,388 76,388 71,397 76,404 60,416 54,435",
	"82,388 88,401 97,415 112,423 125,431 140,440 150,445 152,452 163,458 178,457",
	"152,445 144,465 149,480 148,494",
	"220,209 240,213 250,220 244,238 228,258 217,288 223,297 234,320",
	"54,499 64,510 75,522 88,527 108,546 130,562 134,575 154,601 162,611 165,620 173,622 192,613 205,610 217,621 240,622 262,618 280,616",
	"154,601 151,610 151,635 148,650",
	"240,622 239,630 222,643 210,650 212,658 221,666 223,680 228,681",
	"64,511 56,530",
	"54,495 63,500 64,512",
	"90,799 105,794 113,785 117,770 133,758 146,752 156,737 170,730 185,720 200,726 215,732 228,733 235,712 240,698 250,684",
	"113,799 128,785 143,772 157,756 165,750 178,735 182,728 200,724 218,731 230,728 236,715",
	"522,209 514,228 500,240 480,250",
	"580,209 594,224 603,246 615,267",
	"649,209 648,228 645,242 630,249 620,256 615,270 607,288 601,306",
	"82,490 91,486",
	"240,752 239,758",
	"243,765 241,775",
];

const rivers = [
	"248,209 235,216 218,212 211,218 208,235 200,247 195,262 183,274 168,283 150,282 138,292 135,305",
	"207,565 202,585 190,606 172,620 155,628 146,645 144,690 150,705 165,720 178,723 182,738",
	"531,209 533,222 531,228 536,242",
	"282,217 285,221",
];

const prefectureLines = [
	"290,210 287,218 298,227 304,238 303,257 305,275 304,292",
	"54,300 62,303 58,320 68,325 80,316 98,313 110,313 113,298 127,295 132,282 145,272 168,270 171,282 173,298 193,312 194,330 190,335 195,342",
	"54,695 61,693 76,682 86,675 80,662 86,640 84,632 96,620 100,613 93,605 103,583 93,577 104,553 116,558 129,532 145,537 151,549 175,545 180,556 197,547 203,547",
	"100,613 104,625 109,645 106,680 112,693 128,693 136,721 154,727 161,720 159,690 161,668 172,661 176,672 190,674 192,681 220,677 238,671",
];

const lowlands = [
	"112,215 125,222 118,240 130,255 122,275 110,290 105,255 108,230",
	"205,215 222,235 210,260 200,285 185,280 195,250",
	"118,300 135,310 138,340 128,375 110,392 95,390 105,360 122,340",
	"72,400 90,405 110,440 150,455 180,460 182,480 168,485 140,465 110,450 80,430",
	"250,215 262,240 255,270 240,290 225,285 235,255",
	"78,520 110,545 145,580 175,610 200,600 215,615 180,632 152,620 130,580 100,560",
	"205,545 240,565 255,590 240,610 215,600 225,580 205,565",
	"500,225 535,222 545,265 560,300 547,318 530,300 505,280",
	"636,215 655,212 647,280 613,300 606,305 615,275 632,250",
	"90,795 120,760 160,735 230,725 255,745 228,738 183,738 165,752 130,785 120,799",
	"215,350 225,340 232,326 218,330 200,335",
];

const sea = {
	shallow: [
		"655,209 656,220 648,245 647,283 637,292 625,297 613,302 605,315 570,420 560,500 550,560 480,600 435,600 415,612 385,640 366,670 350,690 320,690 300,696 280,713 282,730 273,740 270,755 275,760 273,773 283,783 285,800 740,800 740,205",
		"183,738 207,737 222,743 233,757 232,763 212,763 207,777 212,790 207,800 122,800 130,788 160,767 167,750",
		"54,205 134,208 118,222 107,230 77,237 54,252",
	],
	mid: [
		"740,273 727,282 713,285 722,290 710,308 693,332 677,358 657,382 640,408 633,438 630,468 642,512 643,520 663,550 683,563 697,590 692,613 693,647 670,667 637,685 613,677 627,692 610,717 570,750 547,760 520,750 490,747 470,767 463,780 447,800 740,800",
		"285,800 277,770 285,740 300,717 330,710 355,715 365,735 385,745 400,723 413,745 408,765 400,780 425,800",
		"170,752 190,740 215,745 228,757 210,765 204,780 206,800 150,800 165,780",
		"54,205 100,205 85,225 60,233 54,228",
	],
	deep: [
		"740,397 723,408 708,418 700,432 708,445 702,462 712,478 710,515 713,567 717,620 717,687 690,700 640,697 657,707 637,733 613,763 580,767 553,787 547,800 740,800",
		"307,747 333,733 360,740 373,763 400,777 410,800 307,800 297,773",
		"178,765 190,752 203,768 197,800 172,800",
	],
	deeper: [
		"658,707 670,720 700,713 740,690 740,800 613,800 627,777 657,760 653,727",
		"500,785 515,790 525,800 480,800",
		"680,705 692,705 693,714 682,716",
	],
	deepest: ["700,747 715,738 740,733 740,800 690,800 705,770"],
};

type City = { name: string; x: number; y: number; dot?: number[]; strong?: boolean };

const cities: City[] = [
	{ name: "上越市", x: 105, y: 236, dot: [103, 240], strong: true },
	{ name: "いわき市", x: 637, y: 262, dot: [635, 266] },
	{ name: "長野市", x: 97, y: 360, dot: [95, 365] },
	{ name: "松本市", x: 55, y: 462, strong: true },
	{ name: "長野県", x: 48, y: 494 },
	{ name: "甲府市", x: 171, y: 603, dot: [169, 607], strong: true },
	{ name: "富士市", x: 192, y: 726, dot: [190, 730], strong: true },
	{ name: "沼津市", x: 229, y: 742, dot: [227, 746], strong: true },
	{ name: "静岡市", x: 134, y: 771, dot: [132, 775], strong: true },
	{ name: "横須賀市", x: 390, y: 697 },
];

const fadedCities: City[] = [
	{ name: "群馬県", x: 235, y: 403 },
	{ name: "前橋市", x: 269, y: 425, dot: [267, 429] },
	{ name: "太田市", x: 331, y: 449, dot: [329, 453] },
	{ name: "熊谷市", x: 334, y: 485, dot: [332, 489] },
	{ name: "栃木県", x: 401, y: 358 },
	{ name: "宇都宮市", x: 437, y: 386, dot: [435, 390] },
	{ name: "水戸市", x: 542, y: 430, dot: [540, 434] },
	{ name: "茨城県", x: 511, y: 453 },
	{ name: "つくば市", x: 472, y: 508, dot: [470, 512] },
	{ name: "船橋市", x: 452, y: 597 },
	{ name: "千葉市", x: 478, y: 618 },
	{ name: "千葉県", x: 478, y: 660 },
];

const CityLabels = ({ items, halo }: { items: City[]; halo?: string }) => (
	<>
		{items.map((c) => (
			<g key={c.name}>
				{c.dot && <circle cx={c.dot[0]} cy={c.dot[1]} r="2.600" fill="#fff" stroke={c.strong ? "#444" : "#777"} strokeWidth="1.300" />}
				<text
					x={c.x}
					y={c.y}
					className="text-[11px] font-medium"
					fill={c.strong ? "#3a3a3a" : "#737373"}
					stroke={halo}
					strokeWidth="2"
					paintOrder="stroke"
				>
					{c.name}
				</text>
			</g>
		))}
	</>
);

const MapView = () => (
	<svg
		viewBox="55 210 681 589"
		preserveAspectRatio="xMidYMid slice"
		className="min-h-0 w-full flex-1 bg-[#e6ecbe]"
		role="img"
		aria-label="関東地方のテリトリー マップ"
	>
		<defs>
			<filter id="terrain" x="0" y="0" width="1" height="1">
				<feTurbulence type="fractalNoise" baseFrequency="0.018 0.024" numOctaves="5" seed="7" />
				<feColorMatrix values="0 0 0 0 .94  0 0 0 0 .95  0 0 0 0 .79  2.500 0 0 0 -.800" />
				<feComponentTransfer>
					<feFuncA type="discrete" tableValues="0 0 0 .4 .6 .7" />
				</feComponentTransfer>
			</filter>
			{territories.map((t) => (
				<clipPath key={t.id} id={`area-${t.id}`}>
					<path d={rough(t.outline, true)} />
				</clipPath>
			))}
		</defs>
		<rect x="54" y="209" width="684" height="592" filter="url(#terrain)" />
		{lowlands.map((p) => <path key={p} d={rough(p, true, 9)} fill="#f6f5d6" />)}
		{sea.shallow.map((p) => <path key={p} d={rough(p, true)} fill="#dcf2fb" stroke="#cfd9c4" />)}
		{sea.mid.map((p) => <path key={p} d={rough(p, true, 5)} fill="#c9eaf9" />)}
		{sea.deep.map((p) => <path key={p} d={rough(p, true, 6)} fill="#b9e3f5" />)}
		{sea.deeper.map((p) => <path key={p} d={rough(p, true, 6)} fill="#a6dcf2" />)}
		{sea.deepest.map((p) => <path key={p} d={rough(p, true, 6)} fill="#94d5ee" />)}
		<path d="M68 510l6-3 5 3-4 5-7 1z" fill="#c9eaf9" />
		<g fill="none" strokeLinejoin="round">
			{prefectureLines.map((p) => <path key={p} d={rough(p)} stroke="#8b8b80" strokeWidth="1" />)}
			{rivers.map((p) => <path key={p} d={rough(p)} stroke="#a4dcec" strokeWidth="1.400" />)}
			{roads.map((p) => <path key={p} d={rough(p, false, 1.6)} stroke="#e8906c" strokeWidth="1.600" />)}
			<path d="M409 640l28 23" stroke="#c88a70" />
		</g>
		<CityLabels items={cities} halo="#fbfbe8" />
		{territories.map((t) => (
			<g key={t.id} strokeLinejoin="round">
				<path d={rough(t.outline, true)} fill={t.fill} />
				{t.mesh && (
					<path d={districts(...t.mesh)} clipPath={`url(#area-${t.id})`} fill="none" stroke="#5b6b60" strokeWidth=".9" />
				)}
				<path d={rough(t.outline, true)} fill="none" stroke="#6a6f62" />
			</g>
		))}
		<g opacity=".22">
			<CityLabels items={fadedCities} />
		</g>
		<g fill="none" stroke="#5f6f64" strokeWidth="1" strokeLinejoin="round">
			{borders.map((p) => <path key={p} d={rough(p)} />)}
		</g>
		<g stroke="#12e6e0" strokeLinejoin="round" strokeLinecap="round">
			<path d={rough(selectedOutline, true)} fill="#2cae88" strokeWidth="3" />
			{selectedBorders.map((p) => <path key={p} d={rough(p)} fill="none" strokeWidth="2.400" />)}
		</g>
		<text x="407" y="636" className="text-[11px] font-bold" fill="#333">崎市</text>
		<g stroke="#777" fill="#fff">
			<path d="M707.500 791.500v-15l2-2h4l2 2h12.500v15l-2-1.500-2 1.500-2-1.500-2 1.500h-2l-2-1.500-2 1.500-2-1.500-2 1.500z" strokeWidth="1.300" />
			<path d="M711 782h14M711 786h14" />
		</g>
	</svg>
);

const MapPane = () => (
	<section className="flex min-w-0 flex-1 flex-col">
		<div className="flex h-[23px] shrink-0 items-stretch border-b-2 border-[#0078d0] text-[#333]">
			<button className="flex w-[89px] items-center gap-1.5 pl-1.5 text-[11px]"><IconCase />カタログ</button>
			<div className="flex w-20 items-center bg-[#0078d0] pl-1.5 text-white">
				<button className="flex items-center gap-1.5 text-[11px]"><IconMapTab />マップ</button>
				<button aria-label="マップを閉じる" className="ml-auto pr-1.5"><Close color="#fff" /></button>
			</div>
			<button aria-label="ビュー一覧" className="ml-auto pr-1"><PaneCaret /></button>
		</div>
		<div className="flex min-h-0 flex-1 flex-col border border-[#cdcdcd]">
			<MapView />
			<div className="flex h-[26px] shrink-0 items-center bg-[#f6f8f8] text-[11px] text-[#444]">
				<div className="relative ml-1 w-[104px]">
					<select aria-label="縮尺" className="block h-[23px] w-full appearance-none border border-[#ababab] bg-white pl-1.5 text-[11px]">
						<option>1:2,197,152</option>
					</select>
					<Caret className="pointer-events-none absolute top-2.5 right-1.5" />
				</div>
				<Divider className="ml-1 h-4" />
				<button aria-label="グリッドに追加" className="ml-1.5"><IconGridPlus /></button>
				<button aria-label="スナップ" className="ml-1.5"><IconEditNodes /></button>
				<button aria-label="グリッド" className="ml-1.5"><IconMesh /></button>
				<button aria-label="方位" className="ml-2"><IconNorth /></button>
				<Divider className="ml-1.5 h-4" />
				<button className="mx-auto flex items-center gap-3 whitespace-nowrap">
					138.0014316°E 36.4050043°N
					<Icon size={10}><path d="M1 3l4 4 4-4" stroke="#555" strokeWidth="1.800" /></Icon>
				</button>
				<Divider className="h-4" />
				<button className="ml-1.5 flex h-[22px] items-center gap-1 bg-white px-1 whitespace-nowrap">
					<IconZoomSel />選択フィーチャ: 1
				</button>
				<Divider className="ml-1 h-4" />
				<button aria-label="描画の一時停止" className="ml-2">
					<Icon size={14}><path d="M4 0v14M10 0v14" stroke="#6b6b6b" strokeWidth="3.500" /></Icon>
				</button>
				<Divider className="ml-2 h-4" />
				<button aria-label="更新" className="mr-1 ml-1.5"><IconRefresh /></button>
			</div>
		</div>
	</section>
);

/* ---------- chart ---------- */

const bars = [
	{ name: "テリトリー 1", value: 4445102, fill: "#00a884" },
	{ name: "テリトリー 2", value: 3412344, fill: "#7af5ca" },
	{ name: "テリトリー 3", value: 3423585, fill: "#ffd37f" },
	{ name: "テリトリー 4", value: 4479884, fill: "#d66b4c" },
	{ name: "テリトリー 5", value: 3841713, fill: "#c4ce8a" },
	{ name: "テリトリー 6", value: 4905000, fill: "#c979f2" },
	{ name: "テリトリー 7", value: 5620000, fill: "#d69dbc" },
	{ name: "テリトリー 8", value: 4670000, fill: "#ffff00" },
	{ name: "テリトリー 9", value: 4430000, fill: "#ff7f7f" },
	{ name: "テリトリー 10", value: 3740000, fill: "#00c5ff" },
];

const scaleY = (v: number) => 223 - (v / 1000000) * 33.2;

const Chart = () => (
	<svg
		viewBox="0 0 680 315"
		className="min-h-0 w-full flex-1 overflow-visible bg-white font-['Noto_Sans_CJK_JP',sans-serif] font-light"
		fill="#222"
		role="img"
		aria-label="名前 による 人口_総数_H27の比較"
	>
		<text x="341" y="18" textAnchor="middle" className="text-[20px]">名前 による  人口_総数_H27の比較</text>
		<text transform="translate(15 130) rotate(-90)" textAnchor="middle" className="text-[15px]">人口_総数_H27</text>
		{[0, 1, 2, 3, 4, 5].map((n) => (
			<g key={n}>
				<path d={`M110 ${scaleY(n * 1000000)}H650`} stroke="#a8a8a8" strokeWidth="1.300" />
				<text x="97" y={scaleY(n * 1000000) + 5} textAnchor="end" className="text-[14px]">
					{(n * 1000000).toLocaleString("en-US")}
				</text>
			</g>
		))}
		{bars.map((bar, i) => {
			const cx = 137 + i * 54.05;
			const top = scaleY(bar.value);
			return (
				<g key={bar.name}>
					<path d={`M${cx} 223v4`} stroke="#999" />
					<rect x={cx - 19} y={top} width="38" height={223 - top} fill={bar.fill} stroke={i === 0 ? "#00ffff" : "#777"} strokeWidth={i === 0 ? 3.500 : 1.300} />
					<text transform={`translate(${cx - 2} 237) rotate(-45)`} textAnchor="end" className="text-[13px]">{bar.name}</text>
				</g>
			);
		})}
		<text x="380" y="312" textAnchor="middle" className="text-[16px]">名前</text>
	</svg>
);

const ChartPane = () => (
	<section className="flex min-h-0 flex-1 flex-col">
		<div className="flex h-6 shrink-0 items-stretch border-b-[3px] border-[#cdcdcd]">
			<div className="flex w-[286px] items-center bg-[#c8c8c8] px-1.5 text-[#6e6e6e]">
				<button className="flex items-center gap-1 text-[11px] whitespace-pre"><IconBars />テリトリー - 名前 による  人口_総数_H27の比較</button>
				<button aria-label="チャートを閉じる" className="ml-auto"><Close color="#777" /></button>
			</div>
			<button aria-label="チャート一覧" className="ml-auto pr-1"><PaneCaret /></button>
		</div>
		<div className="flex min-h-0 flex-1 flex-col border border-[#cdcdcd]">
			<div className="flex h-8 shrink-0 items-center border-b border-[#cdcdcd] text-[#444]">
				<button aria-label="プロパティ" className="ml-2.5"><IconProps16 /></button>
				<button aria-label="並べ替え" className="ml-2.5"><IconSortChart /></button>
				<button aria-label="方向" className="ml-2.5 flex items-center gap-1"><IconUpDown /><Caret /></button>
				<Divider className="ml-2 h-6" />
				<span className="ml-1.5 text-[10px] font-medium">フィルター:</span>
				<button aria-label="範囲でフィルター" className="ml-2"><IconFunnelMap /></button>
				<button aria-label="選択でフィルター" className="ml-3"><IconFunnelSel /></button>
				<Divider className="ml-2.5 h-6" />
				<button aria-label="テーブル" className="ml-2"><IconTable /></button>
				<button aria-label="選択の切り替え" className="ml-3"><IconSwitch /></button>
				<Divider className="ml-2.5 h-6" />
				<button aria-label="軸の回転" className="ml-2"><IconRotateAxis /></button>
				<Divider className="ml-2.5 h-6" />
				<button aria-label="選択ツール" className="ml-1.5 border-2 border-[#9fd4f5] bg-white p-0.5"><IconCursorSel /></button>
				<button aria-label="ズーム" className="ml-2"><IconZoomIn /></button>
				<button aria-label="全体表示" className="ml-2.5"><IconExpand /></button>
				<button aria-label="凡例" className="mr-1.5 ml-auto bg-[#bbd3e8] px-[3px] py-1"><IconLegend /></button>
				<Caret className="mr-2.5" />
			</div>
			<Chart />
		</div>
	</section>
);

/* ---------- attribute table ---------- */

const rows = [
	{ id: 1, name: "テリトリー 1", population: 4445102 },
	{ id: 2, name: "テリトリー 2", population: 3412344 },
	{ id: 3, name: "テリトリー 3", population: 3423585 },
	{ id: 4, name: "テリトリー 4", population: 4479884 },
	{ id: 5, name: "テリトリー 5", population: 3841713 },
];

const cell = "border-r border-b border-[#c6c6c6]";

const AttributeTable = () => (
	<table className="w-full table-fixed border-collapse text-[13px] whitespace-nowrap text-[#555]">
		<colgroup>
			<col className="w-[25px]" />
			<col className="w-1" />
			<col className="w-[69px]" />
			<col className="w-[167px]" />
			<col className="w-[115px]" />
			<col className="w-[118px]" />
			<col className="w-[137px]" />
			<col />
		</colgroup>
		<thead>
			<tr className="h-[25px] bg-[#ebebeb] text-left text-[#444] *:font-normal">
				<th className={`${cell} bg-[#f4f4f4]`} aria-label="行">
					<svg width="12" height="10" viewBox="0 0 12 10" className="mt-1 ml-2.5" aria-hidden="true">
						<path d="M11.500 0v9.500H.5z" fill="#777" />
					</svg>
				</th>
				<th className={cell} aria-hidden="true" />
				<th className={`${cell} pl-2`}>ID</th>
				<th className={`${cell} pl-2`}>名前</th>
				<th className={`${cell} pr-2 text-right`}>人口_総数_H27</th>
				<th className={`${cell} pr-2 text-right`}>上位テリトリー ID</th>
				<th className={`${cell} pl-2 text-xs`}>ロックされたテリトリー</th>
				<th className="overflow-hidden border-b border-[#c6c6c6] pl-2">消費</th>
			</tr>
		</thead>
		<tbody>
			{rows.map((row) => {
				const selected = row.id === 1;
				const shade = selected ? "bg-[#8affff]" : row.id % 2 === 0 ? "bg-[#ebebeb]" : "bg-white";
				return (
					<tr key={row.id} className={`h-7 ${shade}`}>
						<td className={`${cell} ${selected ? "bg-linear-to-r from-[#b9d1e8] from-80% to-[#0078c8] to-80%" : "bg-[#dedede]"}`} />
						<td className={cell} />
						<td className={`${cell} pr-2 text-right ${selected ? "bg-[#c5dcf0] text-[#333]" : ""}`}>{row.id}</td>
						<td className={`${cell} pl-[3px]`}>{row.name}</td>
						<td className={`${cell} pr-2 text-right`}>{row.population}</td>
						<td className={`${cell} pr-2 text-right`}>&lt;NULL&gt;</td>
						<td className={`${cell} pl-[3px]`}>Unlocked</td>
						<td className="border-b border-[#c6c6c6]" />
					</tr>
				);
			})}
		</tbody>
	</table>
);

const TableTool = ({ icon, label }: { icon: ReactNode; label: string }) => (
	<button className={`ml-2 flex items-center gap-1 whitespace-nowrap ${isKatakana(label) ? "text-[10px]" : ""}`}>
		{icon}
		{label}
	</button>
);

const TablePane = () => (
	<section className="mt-[7px] flex shrink-0 flex-col">
		<div className="flex h-[23px] items-stretch border-b-[3px] border-[#cdcdcd]">
			<div className="flex w-[95px] items-center bg-[#c8c8c8] px-1.5 text-[#6e6e6e]">
				<button className="flex items-center gap-1.5 text-[11px]"><IconTable />テリトリー</button>
				<button aria-label="テーブルを閉じる" className="ml-auto"><Close color="#777" /></button>
			</div>
			<button aria-label="テーブル一覧" className="ml-auto pr-1"><PaneCaret /></button>
		</div>
		<div className="border border-[#cdcdcd] px-px">
			<div className="flex h-[31px] items-center border border-[#b5b5b5] text-xs text-[#444]">
				<span className="ml-1 text-[10px] font-medium">フィールド:</span>
				<TableTool icon={<IconFieldAdd />} label="追加" />
				<TableTool icon={<IconFieldCalc />} label="計算" />
				<Divider className="ml-2.5 h-5" />
				<span className="ml-2 text-[11px] font-medium">選択セット:</span>
				<TableTool icon={<IconZoomSel />} label="ズーム" />
				<TableTool icon={<IconSwitch />} label="切り替え" />
				<TableTool icon={<IconRows />} label="解除" />
				<TableTool icon={<IconRowsDelete />} label="削除" />
				<TableTool icon={<IconCopy />} label="コピー" />
				<button aria-label="メニュー" className="mr-2 ml-auto">
					<Icon size={15}><path d="M0 2h15M0 7.500h15M0 13h15" stroke="#555" strokeWidth="2.600" /></Icon>
				</button>
			</div>
			<div className="mt-px border border-[#b5b5b5] bg-white">
				<div className="flex">
					<div className="h-[157px] min-w-0 flex-1 overflow-hidden">
						<AttributeTable />
					</div>
					<div className="flex w-4 flex-col items-center pt-7">
						<svg width="10" height="9" viewBox="0 0 10 9" aria-hidden="true"><path d="M5 0l5 9H0z" fill="#999" /></svg>
						<div className="mt-0.5 w-[9px] flex-1 bg-[#dedede]">
							<div className="h-11 bg-[#78bbe8]" />
						</div>
					</div>
				</div>
				<div className="flex h-4 items-center">
					<svg width="10" height="9" viewBox="0 0 10 9" className="ml-[26px]" aria-hidden="true"><path d="M0 4.500L10 0v9z" fill="#999" /></svg>
					<div className="ml-1 flex h-[9px] flex-1 bg-[#dedede]">
						<div className="ml-[35%] w-[57%] bg-[#78bbe8]" />
					</div>
					<svg width="8" height="9" viewBox="0 0 8 9" className="ml-1" aria-hidden="true"><path d="M8 4.500L0 0v9z" fill="#999" /></svg>
					<svg width="10" height="9" viewBox="0 0 10 9" className="mr-[3px] ml-1" aria-hidden="true"><path d="M5 9l5-9H0z" fill="#999" /></svg>
				</div>
			</div>
			<div className="flex h-7 items-center bg-[#f6f8f8] text-[11px] text-[#444]">
				<button aria-label="すべて表示" className="border border-[#2a7ec0] bg-[#a9c9e6] px-0.5 py-[3px]"><IconRows /></button>
				<button aria-label="選択のみ表示" className="ml-2">
					<Icon size={16}>
						<path d="M.5 1.500h15v10H.5z" fill="#cfe3f2" stroke="#666" />
						<path d="M.5 5h15M.5 8.500h15" stroke="#666" />
					</Icon>
				</button>
				<span className="ml-2.5">1/10 が選択されました</span>
				<span className="ml-auto text-[10px]">フィルター:</span>
				<button aria-label="時間フィルター" className="ml-2.5"><IconClock /></button>
				<button aria-label="範囲フィルター" className="ml-2"><IconRange /></button>
				<button aria-label="選択フィルター" className="ml-2"><IconFunnelSel /></button>
				<Divider className="ml-1 h-4" />
				<span className="ml-0.5 flex"><IconUpDown faint /></span>
				<button aria-label="縮小" className="ml-2 w-3 text-sm font-bold">-</button>
				<input
					type="range"
					aria-label="表示倍率"
					defaultValue={55}
					className="mx-1.5 h-[3px] w-[104px] appearance-none bg-linear-to-r from-[#a8a8a8] from-55% to-[#dcdcdc] to-55% [&::-webkit-slider-thumb]:h-3 [&::-webkit-slider-thumb]:w-[3px] [&::-webkit-slider-thumb]:appearance-none [&::-webkit-slider-thumb]:bg-[#777]"
				/>
				<button aria-label="拡大" className="w-3 text-sm font-bold">+</button>
				<div className="relative ml-1.5 w-[62px]">
					<select aria-label="倍率" className="block h-[22px] w-full appearance-none bg-white pl-1.5 text-xs">
						<option>120%</option>
					</select>
					<Caret className="pointer-events-none absolute top-2.5 right-1.5" />
				</div>
				<Divider className="ml-1.5 h-4" />
				<button aria-label="更新" className="mr-1 ml-2"><IconRefresh /></button>
			</div>
		</div>
	</section>
);

/* ---------- docked side tabs ---------- */

const SideTab = ({ label, side }: { label: string; side: "left" | "right" }) => (
	<button
		className={`text-[10px] leading-4 text-[#555] [text-orientation:sideways] [writing-mode:vertical-rl] ${
			side === "left" ? "border-l-[6px] border-[#cdcdcd] pl-0.5" : "border-r-[3px] border-[#d5d5d5] pr-1"
		}`}
	>
		{label}
	</button>
);

export default function App() {
	return (
		<div className="flex min-h-screen flex-col bg-white font-['Open_Sans','Noto_Sans_CJK_JP',sans-serif] [font-feature-settings:'palt']">
			<main className="flex min-h-0 flex-1 flex-col rounded-[14px] bg-linear-to-b from-[#262626] via-[#1c1c1c] to-black p-[21px]">
				<div className="flex min-h-0 flex-1 flex-col bg-[#f1f1f1]">
					<Header />
					<Ribbon />
					<div className="flex min-h-0 flex-1 pt-1.5">
						<aside className="w-[33px] shrink-0">
							<SideTab label="コンテンツ" side="left" />
						</aside>
						<div className="flex min-w-0 flex-1 gap-1.5 pb-px">
							<MapPane />
							<div className="flex min-w-0 flex-1 flex-col">
								<ChartPane />
								<TablePane />
							</div>
						</div>
						<aside className="flex w-[30px] shrink-0 flex-col items-end gap-3">
							<SideTab label="カタログ" side="right" />
							<SideTab label="ジオプロセシング" side="right" />
						</aside>
					</div>
				</div>
			</main>
			<div className="mx-auto h-[61px] w-[201px] shrink-0 bg-linear-to-b from-[#121212] to-[#232323] to-40%" />
			<div className="mx-auto h-[18px] w-[583px] shrink-0 rounded-t-[12px] border-b-[5px] border-black bg-[#262626]" />
		</div>
	);
}
